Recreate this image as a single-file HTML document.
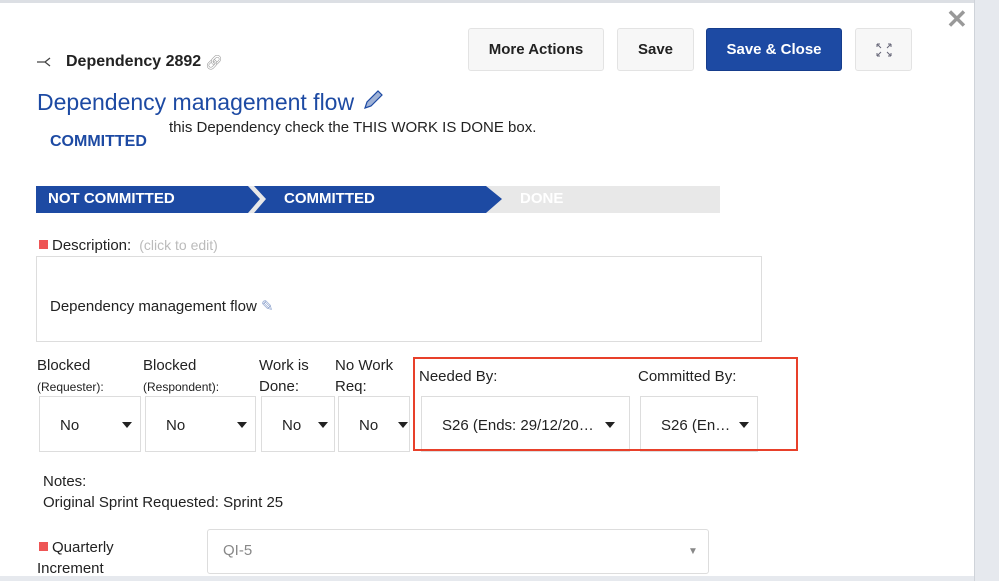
<!DOCTYPE html>
<html><head><style>
*{box-sizing:border-box;margin:0;padding:0}
body{width:999px;height:581px;overflow:hidden;background:#fff;font-family:"Liberation Sans",sans-serif;color:#172b4d;position:relative}
.a{position:absolute}
.btn{position:absolute;top:28px;height:43px;border:1px solid #e3e3e3;border-radius:3px;background:#f7f7f7;font-size:15px;font-weight:bold;color:#222;display:flex;align-items:center;justify-content:center}
.dd{position:absolute;top:396px;height:56px;border:1px solid #ddd;background:#fff;font-size:15px;color:#222}
.dd span{position:absolute;top:20px}
.dd i{position:absolute;top:25px;width:0;height:0;border-left:5px solid transparent;border-right:5px solid transparent;border-top:6px solid #222}
.lbl{position:absolute;font-size:15px;color:#222;line-height:21px}
.sm{font-size:12px}
</style></head><body>
<div class="a" style="left:0;top:0;width:999px;height:3px;background:#dcdfe4"></div>
<div class="a" style="left:974px;top:0;width:25px;height:581px;background:#e6e9ee;border-left:1px solid #cfd3d9"></div>
<div class="a" style="left:0;top:576px;width:974px;height:5px;background:#e6e9ee"></div>
<div class="a" style="left:946px;top:4px;font-size:26px;font-weight:bold;color:#999">✕</div>

<svg class="a" style="left:37px;top:56px" width="18" height="12" viewBox="0 0 18 12"><path d="M0 6H8M8 6L13 2M8 6L13 10" stroke="#444" stroke-width="1.3" fill="none"/></svg>
<div class="a" style="left:66px;top:53px;font-size:16px;font-weight:bold;color:#222">Dependency 2892</div>
<div class="a" style="left:205px;top:54px;font-size:14px;color:#999">🔗︎</div>
<div class="a" style="left:37px;top:89px;font-size:23px;color:#1d4aa3">Dependency management flow</div>
<svg class="a" style="left:362px;top:89px" width="22" height="22" viewBox="0 0 22 22"><path d="M3 19L5 13L16 2L20 6L9 17Z" fill="#9fb2d6" stroke="#1d4aa3" stroke-width="1.2"/></svg>
<div class="a" style="left:50px;top:133px;font-size:16px;font-weight:bold;color:#1d4aa3">COMMITTED</div>
<div class="a" style="left:169px;top:119px;font-size:15px;color:#222">this Dependency check the THIS WORK IS DONE box.</div>

<svg class="a" style="left:36px;top:186px" width="684" height="28" viewBox="0 0 684 28">
<rect x="0" y="0" width="684" height="27" fill="#e8e8e8"/>
<polygon points="0,0 212,0 224,13 212,27 0,27" fill="#1d4aa3"/>
<polygon points="218,0 450,0 466,13 450,27 218,27 230,13" fill="#1d4aa3"/>
<text x="12" y="17" font-family="Liberation Sans" font-weight="bold" font-size="15" fill="#fff">NOT COMMITTED</text>
<text x="248" y="17" font-family="Liberation Sans" font-weight="bold" font-size="15" fill="#fff">COMMITTED</text>
<text x="484" y="17" font-family="Liberation Sans" font-weight="bold" font-size="15" fill="#fff">DONE</text>
</svg>

<div class="a" style="left:39px;top:240px;width:9px;height:9px;background:#e55"></div>
<div class="lbl" style="left:52px;top:235px">Description: <span style="color:#bbb;font-size:14px">&nbsp;(click to edit)</span></div>
<div class="a" style="left:36px;top:256px;width:726px;height:86px;border:1px solid #ddd"></div>
<div class="a" style="left:50px;top:297px;font-size:15px;color:#222">Dependency management flow <span style="color:#8aa0cc">✎</span></div>

<div class="lbl" style="left:37px;top:355px">Blocked<br><span class="sm">(Requester):</span></div>
<div class="lbl" style="left:143px;top:355px">Blocked<br><span class="sm">(Respondent):</span></div>
<div class="lbl" style="left:259px;top:355px">Work is<br>Done:</div>
<div class="lbl" style="left:335px;top:355px">No Work<br>Req:</div>
<div class="lbl" style="left:419px;top:366px">Needed By:</div>
<div class="lbl" style="left:638px;top:366px">Committed By:</div>

<div class="dd" style="left:39px;width:102px"><span style="left:20px">No</span><i style="left:82px"></i></div>
<div class="dd" style="left:145px;width:111px"><span style="left:20px">No</span><i style="left:91px"></i></div>
<div class="dd" style="left:261px;width:74px"><span style="left:20px">No</span><i style="left:56px"></i></div>
<div class="dd" style="left:338px;width:72px"><span style="left:20px">No</span><i style="left:59px"></i></div>
<div class="dd" style="left:421px;width:209px"><span style="left:20px">S26 (Ends: 29/12/20…</span><i style="left:183px"></i></div>
<div class="dd" style="left:640px;width:118px"><span style="left:20px">S26 (En…</span><i style="left:98px"></i></div>
<div class="a" style="left:413px;top:357px;width:385px;height:94px;border:2px solid #e8402a"></div>

<div class="lbl" style="left:43px;top:471px">Notes:</div>
<div class="lbl" style="left:43px;top:492px">Original Sprint Requested: Sprint 25</div>

<div class="a" style="left:39px;top:542px;width:9px;height:9px;background:#e55"></div>
<div class="lbl" style="left:52px;top:537px">Quarterly</div>
<div class="lbl" style="left:37px;top:558px">Increment</div>
<div class="a" style="left:207px;top:529px;width:502px;height:45px;border:1px solid #ddd;border-radius:3px;font-size:15px;color:#888"><span style="position:absolute;left:15px;top:12px">QI-5</span><span style="position:absolute;left:480px;top:16px;font-size:10px;color:#888">▼</span></div>

<div class="btn" style="left:468px;width:136px">More Actions</div>
<div class="btn" style="left:617px;width:77px">Save</div>
<div class="btn" style="left:706px;width:136px;background:#1d4aa3;border-color:#163d8c;color:#fff">Save &amp; Close</div>
<div class="btn" style="left:855px;width:57px"><svg width="18" height="16" viewBox="0 0 18 16"><path d="M2 2L6 6M2 2V5M2 2H5M16 2L12 6M16 2V5M16 2H13M2 14L6 10M2 14V11M2 14H5M16 14L12 10M16 14V11M16 14H13" stroke="#667" stroke-width="1" fill="none"/></svg></div>
</body></html>
